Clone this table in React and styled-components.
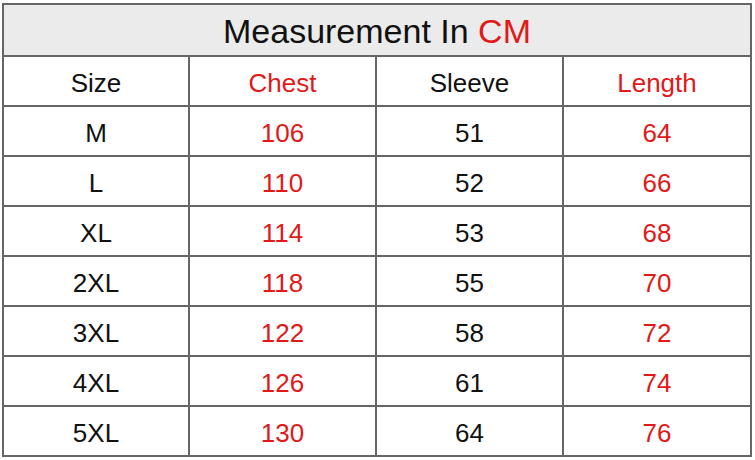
import React from "react";
import styled, { createGlobalStyle } from "styled-components";

const Global = createGlobalStyle`
  html, body { margin: 0; padding: 0; background: #ffffff; }
  body { font-family: "Liberation Sans", Arial, sans-serif; }
`;

const Page = styled.div`
  width: 755px;
  height: 460px;
  padding: 3px 0 0 2px;
  box-sizing: border-box;
  background: #ffffff;
`;

const Table = styled.div`
  display: grid;
  grid-template-columns: 186px 187px 187px 188px;
  border-left: 2px solid #666666;
  border-top: 2px solid #666666;
  width: 750px;
  box-sizing: border-box;
`;

const Title = styled.div`
  grid-column: 1 / -1;
  height: 52px;
  box-sizing: border-box;
  border-right: 2px solid #666666;
  border-bottom: 2px solid #666666;
  background: #ebebeb;
  display: flex;
  align-items: center;
  justify-content: center;
  font-size: 34px;
  color: #111111;
  padding-top: 2px;
`;

const Red = styled.span`
  color: #e11919;
`;

const Cell = styled.div`
  height: 50px;
  box-sizing: border-box;
  border-right: 2px solid #666666;
  border-bottom: 2px solid #666666;
  display: flex;
  align-items: center;
  justify-content: center;
  font-size: 26px;
  color: ${(p) => (p.$red ? "#e11919" : "#111111")};
  padding-top: 4px;
`;

const headers = ["Size", "Chest", "Sleeve", "Length"];
const rows = [
  ["M", "106", "51", "64"],
  ["L", "110", "52", "66"],
  ["XL", "114", "53", "68"],
  ["2XL", "118", "55", "70"],
  ["3XL", "122", "58", "72"],
  ["4XL", "126", "61", "74"],
  ["5XL", "130", "64", "76"],
];

export default function App() {
  return (
    <>
      <Global />
      <Page>
        <Table>
          <Title>
            Measurement In&nbsp;<Red>CM</Red>
          </Title>
          {headers.map((h, i) => (
            <Cell key={h} $red={i % 2 === 1}>
              {h}
            </Cell>
          ))}
          {rows.map((r) =>
            r.map((v, i) => (
              <Cell key={r[0] + i} $red={i % 2 === 1}>
                {v}
              </Cell>
            ))
          )}
        </Table>
      </Page>
    </>
  );
}
